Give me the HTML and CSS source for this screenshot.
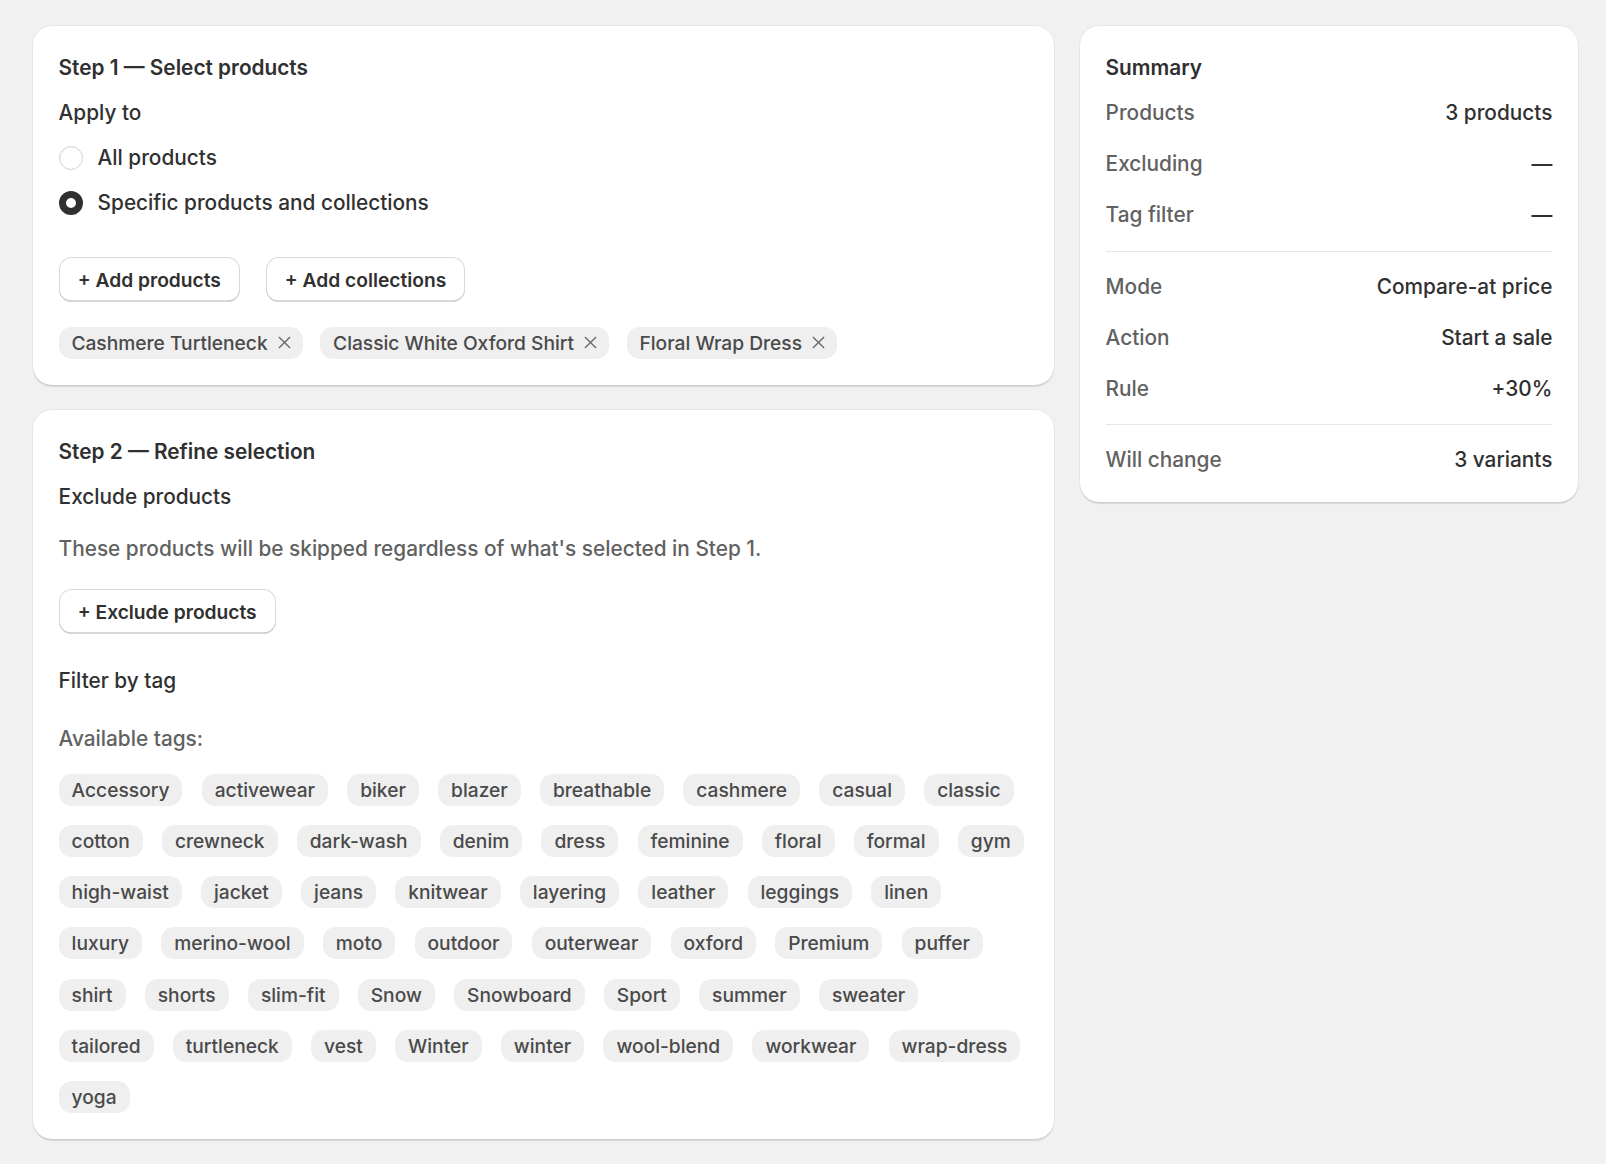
FILE: index.html
```html
<!DOCTYPE html>
<html lang="en">
<head>
    <meta charset="UTF-8">
    <meta name="viewport" content="width=device-width, initial-scale=1.0">
    <title>Bulk price editor</title>
    <link rel="stylesheet" href="styles.css">
</head>
<body>
    <div class="layout">
        <div class="main-col">
            <section class="card">
                <div class="stack">
                    <h2 class="card-title">Step 1 — Select products</h2>
                    <p class="field-label">Apply to</p>
                    <label class="radio">
                        <span class="radio-dot"></span>
                        <span>All products</span>
                    </label>
                    <label class="radio">
                        <span class="radio-dot checked"></span>
                        <span>Specific products and collections</span>
                    </label>
                </div>
                <div class="actions">
                    <button class="btn">+ Add products</button>
                    <button class="btn">+ Add collections</button>
                </div>
                <div class="chips">
                    <span class="chip">Cashmere Turtleneck
                        <svg class="chip-x" viewBox="0 0 14 14"><path d="M1 1l12 12M13 1L1 13"/></svg>
                    </span>
                    <span class="chip">Classic White Oxford Shirt
                        <svg class="chip-x" viewBox="0 0 14 14"><path d="M1 1l12 12M13 1L1 13"/></svg>
                    </span>
                    <span class="chip">Floral Wrap Dress
                        <svg class="chip-x" viewBox="0 0 14 14"><path d="M1 1l12 12M13 1L1 13"/></svg>
                    </span>
                </div>
            </section>

            <section class="card">
                <div class="stack">
                    <h2 class="card-title">Step 2 — Refine selection</h2>
                    <p class="field-label">Exclude products</p>
                </div>
                <p class="help-text">These products will be skipped regardless of what's selected in Step 1.</p>
                <div class="actions">
                    <button class="btn">+ Exclude products</button>
                </div>
                <p class="field-label tag-heading">Filter by tag</p>
                <p class="help-text tags-caption">Available tags:</p>
                <div class="tags" id="tagList"></div>
            </section>
        </div>

        <aside class="card summary">
            <h2 class="card-title">Summary</h2>
            <div class="summary-rows">
                <div class="row"><span class="row-label">Products</span><span>3 products</span></div>
                <div class="row"><span class="row-label">Excluding</span><span>—</span></div>
                <div class="row"><span class="row-label">Tag filter</span><span>—</span></div>
                <hr class="divider">
                <div class="row"><span class="row-label">Mode</span><span>Compare-at price</span></div>
                <div class="row"><span class="row-label">Action</span><span>Start a sale</span></div>
                <div class="row"><span class="row-label">Rule</span><span>+30%</span></div>
                <hr class="divider">
                <div class="row"><span class="row-label">Will change</span><span>3 variants</span></div>
            </div>
        </aside>
    </div>

    <script>
        const tags = [
            'Accessory', 'activewear', 'biker', 'blazer', 'breathable', 'cashmere', 'casual', 'classic',
            'cotton', 'crewneck', 'dark-wash', 'denim', 'dress', 'feminine', 'floral', 'formal', 'gym',
            'high-waist', 'jacket', 'jeans', 'knitwear', 'layering', 'leather', 'leggings', 'linen',
            'luxury', 'merino-wool', 'moto', 'outdoor', 'outerwear', 'oxford', 'Premium', 'puffer',
            'shirt', 'shorts', 'slim-fit', 'Snow', 'Snowboard', 'Sport', 'summer', 'sweater',
            'tailored', 'turtleneck', 'vest', 'Winter', 'winter', 'wool-blend', 'workwear', 'wrap-dress',
            'yoga'
        ];

        const tagList = document.getElementById('tagList');
        tags.forEach(tag => {
            const pill = document.createElement('button');
            pill.className = 'tag';
            pill.textContent = tag;
            tagList.appendChild(pill);
        });
    </script>
</body>
</html>
```

FILE: styles.css
```css
body {
    margin: 0;
    background-color: #f1f1f1;
    color: #303030;
    font-family: Inter, "Noto Sans", sans-serif;
    font-size: 20.8px;
    line-height: 32px;
    font-weight: 450;
}

p, h2 {
    margin: 0;
}

.layout {
    display: grid;
    grid-template-columns: 1021px 498px;
    column-gap: 26px;
    align-items: start;
    padding: 26px 28px 26px 33px;
}

.main-col {
    display: flex;
    flex-direction: column;
    gap: 25.6px;
}

.card {
    background-color: #fff;
    border-radius: 19.2px;
    padding: 25.6px;
    box-shadow: 0 0 0 1px rgba(0, 0, 0, 0.03), 0 1.6px 1px rgba(26, 26, 26, 0.12);
}

.card-title {
    font-size: 20.8px;
    font-weight: 600;
}

.stack {
    display: flex;
    flex-direction: column;
    gap: 12.8px;
}

.stack .card-title {
    margin-bottom: 0.8px;
}

.radio {
    display: flex;
    align-items: center;
    gap: 15px;
}

.radio-dot {
    width: 24px;
    height: 24px;
    box-sizing: border-box;
    border-radius: 50%;
    border: 1px solid #d2d2d2;
    background-color: #fff;
    box-shadow: inset 1px 1px 1px rgba(0, 0, 0, 0.04);
}

.radio-dot.checked {
    border: 7px solid #303030;
    box-shadow: none;
}

.actions {
    display: flex;
    gap: 25.6px;
    margin-top: 38.4px;
}

.help-text + .actions {
    margin-top: 24.6px;
}

.btn {
    font: inherit;
    font-size: 19.2px;
    font-weight: 600;
    color: #303030;
    background-color: #fff;
    border: none;
    border-radius: 12.8px;
    height: 44.8px;
    padding: 0 19.2px;
    box-shadow: inset 0 0 0 1px #d9d9d9, inset 0 -1.6px 0 #b5b5b5;
    cursor: pointer;
}

.chips {
    display: flex;
    gap: 17.6px;
    margin-top: 25px;
}

.chip {
    display: inline-flex;
    align-items: center;
    gap: 10px;
    height: 32px;
    padding: 0 12px 0 12.8px;
    border-radius: 12.8px;
    background-color: #efefef;
    color: #4a4a4a;
    font-size: 19.2px;
}

.chip-x {
    width: 13px;
    height: 13px;
    fill: none;
    stroke: #6b6b6b;
    stroke-width: 1.5;
}

.help-text {
    color: #616161;
    margin-top: 19.2px;
}

.tag-heading {
    margin-top: 31.2px;
}

.tags-caption {
    margin-top: 25.6px;
}

.tags {
    display: flex;
    flex-wrap: wrap;
    gap: 19.2px;
    margin-top: 19.2px;
}

.tag {
    font: inherit;
    font-size: 19.2px;
    color: #4a4a4a;
    background-color: #efefef;
    border: none;
    border-radius: 12.8px;
    height: 32px;
    padding: 0 13px;
    cursor: pointer;
}

.summary .card-title {
    margin-bottom: 13.4px;
}

.summary-rows {
    display: flex;
    flex-direction: column;
    gap: 19.2px;
}

.row {
    display: flex;
    justify-content: space-between;
}

.row-label {
    color: #616161;
}

.divider {
    margin: 0;
    border: none;
    border-top: 1px solid #e6e6e6;
}
```
